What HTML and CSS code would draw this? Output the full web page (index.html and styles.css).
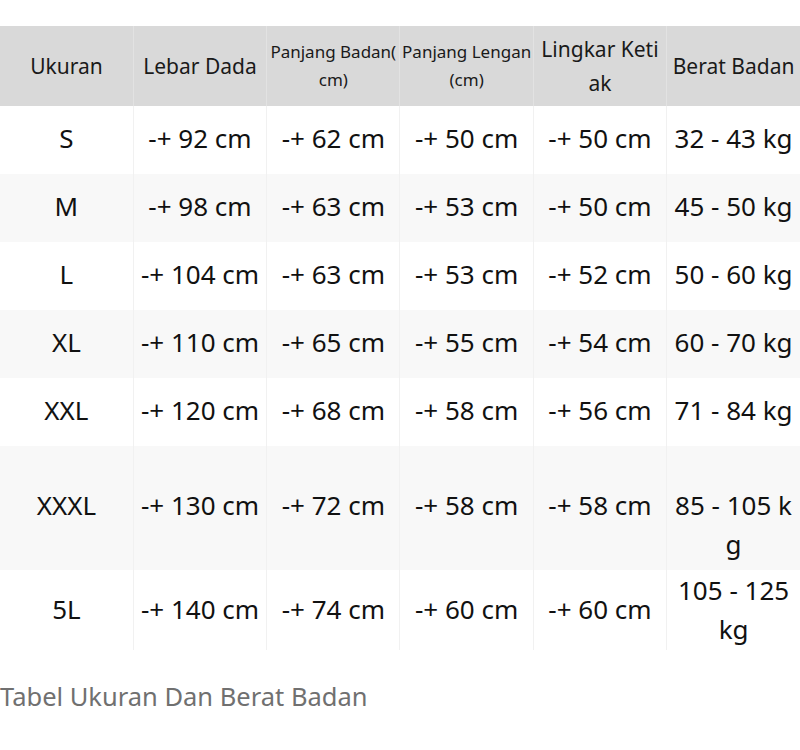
FILE: index.html
```html
<!DOCTYPE html>
<html lang="id">
<head>
<meta charset="utf-8">
<title>Tabel Ukuran</title>
<link rel="stylesheet" href="styles.css">
</head>
<body>
<figure class="size-figure">
  <table class="size-table">
    <colgroup>
      <col><col><col><col><col><col>
    </colgroup>
    <thead>
      <tr class="head-row">
        <th>Ukuran</th>
        <th>Lebar Dada</th>
        <th class="small anywhere">Panjang Badan(cm)</th>
        <th class="small">Panjang Lengan (cm)</th>
        <th>Lingkar Ketiak</th>
        <th>Berat Badan</th>
      </tr>
    </thead>
    <tbody>
      <tr><td>S</td><td>-+ 92 cm</td><td>-+ 62 cm</td><td>-+ 50 cm</td><td>-+ 50 cm</td><td>32 - 43 kg</td></tr>
      <tr class="alt"><td>M</td><td>-+ 98 cm</td><td>-+ 63 cm</td><td>-+ 53 cm</td><td>-+ 50 cm</td><td>45 - 50 kg</td></tr>
      <tr><td>L</td><td>-+ 104 cm</td><td>-+ 63 cm</td><td>-+ 53 cm</td><td>-+ 52 cm</td><td>50 - 60 kg</td></tr>
      <tr class="alt"><td>XL</td><td>-+ 110 cm</td><td>-+ 65 cm</td><td>-+ 55 cm</td><td>-+ 54 cm</td><td>60 - 70 kg</td></tr>
      <tr><td>XXL</td><td>-+ 120 cm</td><td>-+ 68 cm</td><td>-+ 58 cm</td><td>-+ 56 cm</td><td>71 - 84 kg</td></tr>
      <tr class="alt tall"><td>XXXL</td><td>-+ 130 cm</td><td>-+ 72 cm</td><td>-+ 58 cm</td><td>-+ 58 cm</td><td>85 - 105 kg</td></tr>
      <tr class="last"><td>5L</td><td>-+ 140 cm</td><td>-+ 74 cm</td><td>-+ 60 cm</td><td>-+ 60 cm</td><td>105 - 125 kg</td></tr>
    </tbody>
  </table>
  <figcaption class="caption">Tabel Ukuran Dan Berat Badan</figcaption>
</figure>
</body>
</html>
```
FILE: styles.css
```css
html, body {
  margin: 0;
  padding: 0;
  background: #ffffff;
}

body {
  font-family: "Noto Sans", "Open Sans", sans-serif;
  color: #111111;
}

.size-figure {
  margin: 0;
  padding-top: 26px;
  width: 800px;
}

.size-table {
  width: 800px;
  table-layout: fixed;
  border-collapse: collapse;
}

.size-table th,
.size-table td {
  padding: 0 2px;
  text-align: center;
  vertical-align: middle;
  word-break: break-all;
  border-left: 1px solid #f1f1f1;
}

.size-table th:first-child,
.size-table td:first-child {
  border-left: none;
}

.head-row {
  height: 80px;
  background: #d9d9d9;
}

.size-table th {
  font-weight: 400;
  font-size: 21px;
  line-height: 34px;
  color: #1a1a1a;
  border-left-color: #e2e2e2;
}

.size-table th.small {
  font-size: 17px;
  line-height: 28px;
  padding: 0;
}

.size-table th.anywhere {
  line-break: anywhere;
}

.size-table tbody tr {
  height: 68px;
}

.size-table td {
  font-size: 26px;
  line-height: 39px;
  padding-bottom: 4px;
}

.size-table tbody tr.alt {
  background: #f8f8f8;
}

.size-table tbody tr.tall {
  height: 124px;
}

.size-table tbody tr.tall td {
  vertical-align: top;
  padding-top: 40px;
  padding-bottom: 0;
}

.size-table tbody tr.last {
  height: 80px;
}

.size-table tbody tr.last td {
  padding-bottom: 1px;
}

.caption {
  margin: 0;
  padding-top: 28px;
  font-size: 25.5px;
  line-height: 36px;
  color: #707070;
}
```
